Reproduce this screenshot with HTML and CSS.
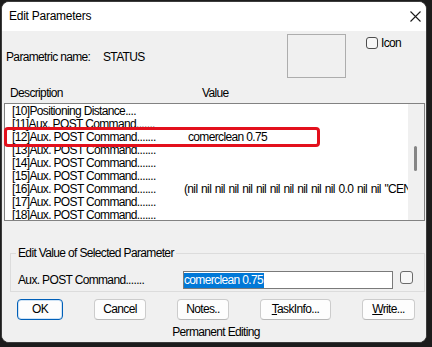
FILE: index.html
```html
<!DOCTYPE html>
<html>
<head>
<meta charset="utf-8">
<title>Edit Parameters</title>
<link rel="stylesheet" href="styles.css">
</head>
<body>
<div class="window">
  <div class="titlebar">
    <span class="title">Edit Parameters</span>
    <svg class="close" width="11" height="11" viewBox="0 0 11 11"><path d="M0.5 0.5L10.5 10.5M10.5 0.5L0.5 10.5" stroke="#1a1a1a" stroke-width="1.1" fill="none"/></svg>
  </div>
  <div class="body">
    <div class="top">
      <div class="pname"><span class="plabel">Parametric name:</span><span class="pval">STATUS</span></div>
      <div class="preview"></div>
      <div class="chk icon-chk"><span class="box"></span><span class="chk-label">Icon</span></div>
    </div>
    <div class="colhead"><span class="c1">Description</span><span class="c2">Value</span></div>
    <div class="list">
      <div class="list-inner">
        <div class="rows">
          <div class="row"><span class="d">[10]Positioning Distance....</span><span class="v"></span></div>
          <div class="row"><span class="d">[11]Aux. POST Command.......</span><span class="v"></span></div>
          <div class="row"><span class="d">[12]Aux. POST Command.......</span><span class="v v-sel">comerclean 0.75</span></div>
          <div class="row"><span class="d">[13]Aux. POST Command.......</span><span class="v"></span></div>
          <div class="row"><span class="d">[14]Aux. POST Command.......</span><span class="v"></span></div>
          <div class="row"><span class="d">[15]Aux. POST Command.......</span><span class="v"></span></div>
          <div class="row"><span class="d">[16]Aux. POST Command.......</span><span class="v v-long">(nil nil nil nil nil nil nil nil nil nil nil 0.0 nil nil "CENTER"</span></div>
          <div class="row"><span class="d">[17]Aux. POST Command.......</span><span class="v"></span></div>
          <div class="row"><span class="d">[18]Aux. POST Command.......</span><span class="v"></span></div>
        </div>
        <div class="scroll"><div class="thumb"></div></div>
      </div>
      <div class="highlight"></div>
    </div>
    <fieldset class="group">
      <legend class="legend">Edit Value of Selected Parameter</legend>
      <div class="edit-row">
        <span class="edit-label">Aux. POST Command.......</span>
        <div class="input"><span class="selected">comerclean 0.75</span></div>
        <span class="box small-box"></span>
      </div>
    </fieldset>
    <div class="buttons">
      <div class="btn btn-ok">OK</div>
      <div class="btn btn-cancel">Cancel</div>
      <div class="btn btn-notes">Notes..</div>
      <div class="btn btn-task"><u>T</u>askInfo...</div>
      <div class="btn btn-write"><u>W</u>rite...</div>
    </div>
    <div class="footer">Permanent Editing</div>
  </div>
</div>
</body>
</html>
```
FILE: styles.css
```css
* { box-sizing: border-box; }
html, body { margin: 0; padding: 0; }
body {
  background: #1c1c1c;
  width: 432px;
  height: 347px;
  overflow: hidden;
  font-family: "Liberation Sans", Arial, sans-serif;
  font-size: 12px;
  letter-spacing: -0.65px;
  color: #000;
}
.window {
  width: 426px;
  height: 342px;
  margin: 1px 0 0 1px;
  border: 1px solid #3c3c3c;
  border-radius: 8px;
  overflow: hidden;
  display: flex;
  flex-direction: column;
  background: #f0f0f0;
}
.titlebar {
  height: 29px;
  flex: none;
  background: #fff;
  display: flex;
  align-items: center;
  justify-content: space-between;
  padding: 0 5px 1px 7px;
}
.title { letter-spacing: -0.25px; font-size: 12px; }
.close { display: block; }
.body {
  flex: 1;
  display: flex;
  flex-direction: column;
  background: #f0f0f0;
}
.top {
  height: 55px;
  flex: none;
  display: flex;
  align-items: flex-start;
}
.pname {
  width: 285px;
  margin-top: 19px;
  padding-left: 4px;
  line-height: 14px;
  display: flex;
}
.plabel { width: 97px; }
.preview {
  width: 59px;
  height: 44px;
  margin-top: 3px;
  border: 1px solid #adadad;
}
.chk {
  display: flex;
  align-items: center;
  margin-left: 20px;
  margin-top: 6px;
  line-height: 12px;
}
.box {
  display: block;
  width: 12px;
  height: 12px;
  border: 1px solid #4d4d4d;
  border-radius: 3px;
  background: #f7f7f7;
}
.chk-label { margin-left: 3px; }
.colhead {
  height: 14px;
  line-height: 14px;
  padding-left: 8px;
  display: flex;
  flex: none;
}
.c1 { width: 192px; }
.list {
  position: relative;
  margin: 3px 1px 0 2px;
  height: 118px;
  flex: none;
}
.list-inner {
  height: 100%;
  border: 1px solid #828282;
  background: #fff;
  overflow: hidden;
  display: flex;
}
.rows {
  flex: 1;
  min-width: 0;
  padding: 1px 0 0 7px;
  overflow: hidden;
}
.row {
  display: flex;
  height: 13px;
  line-height: 13px;
  white-space: nowrap;
}
.d { width: 172px; flex: none; }
.v { white-space: nowrap; }
.v-sel { padding-left: 4px; }
.v-long { word-spacing: 1px; }
.scroll {
  width: 16px;
  flex: none;
  background: #f0f0f0;
  position: relative;
}
.thumb {
  position: absolute;
  left: 6px;
  top: 42px;
  width: 3px;
  height: 25px;
  border-radius: 2px;
  background: #858585;
}
.highlight {
  position: absolute;
  left: 0;
  top: 24px;
  width: 316px;
  height: 20px;
  border: 3px solid #e3101c;
  border-radius: 4px;
  pointer-events: none;
}
.group {
  margin: 25px 1px 0 8px;
  padding: 0 7px 2px 7px;
  border: 1px solid #dcdcdc;
  min-width: 0;
  flex: none;
}
.legend {
  padding: 0 2px;
  margin-left: -2px;
  line-height: 14px;
}
.edit-row {
  margin-top: 11px;
  display: flex;
  align-items: flex-start;
  height: 18px;
}
.edit-label {
  width: 165px;
  line-height: 18px;
}
.input {
  width: 210px;
  height: 18px;
  border: 1px solid #7a7a7a;
  background: #fff;
  padding: 1px 0 0 0;
  line-height: 14px;
}
.selected {
  display: inline-block;
  background: #0078d7;
  color: #fff;
  padding-right: 1px;
  line-height: 15px;
}
.small-box {
  margin-left: 7px;
  width: 13px;
  height: 13px;
  border-color: #6b6b6b;
}
.buttons {
  margin-top: 7px;
  padding-left: 15px;
  display: flex;
  gap: 31px;
  flex: none;
}
.btn {
  height: 21px;
  line-height: 19px;
  text-align: center;
  background: #fdfdfd;
  border: 1px solid #cccccc;
  border-bottom-color: #b8b8b8;
  border-radius: 4px;
}
.btn-ok {
  width: 46px;
  border: 1px solid #005fb8;
  box-shadow: inset 0 0 0 1px #cfe3f5;
}
.btn-cancel { width: 52px; }
.btn-notes { width: 52px; }
.btn-task { width: 71px; }
.btn-write { width: 53px; }
.footer {
  margin-top: 5px;
  line-height: 14px;
  text-align: center;
  padding-left: 4px;
  flex: none;
}
```
